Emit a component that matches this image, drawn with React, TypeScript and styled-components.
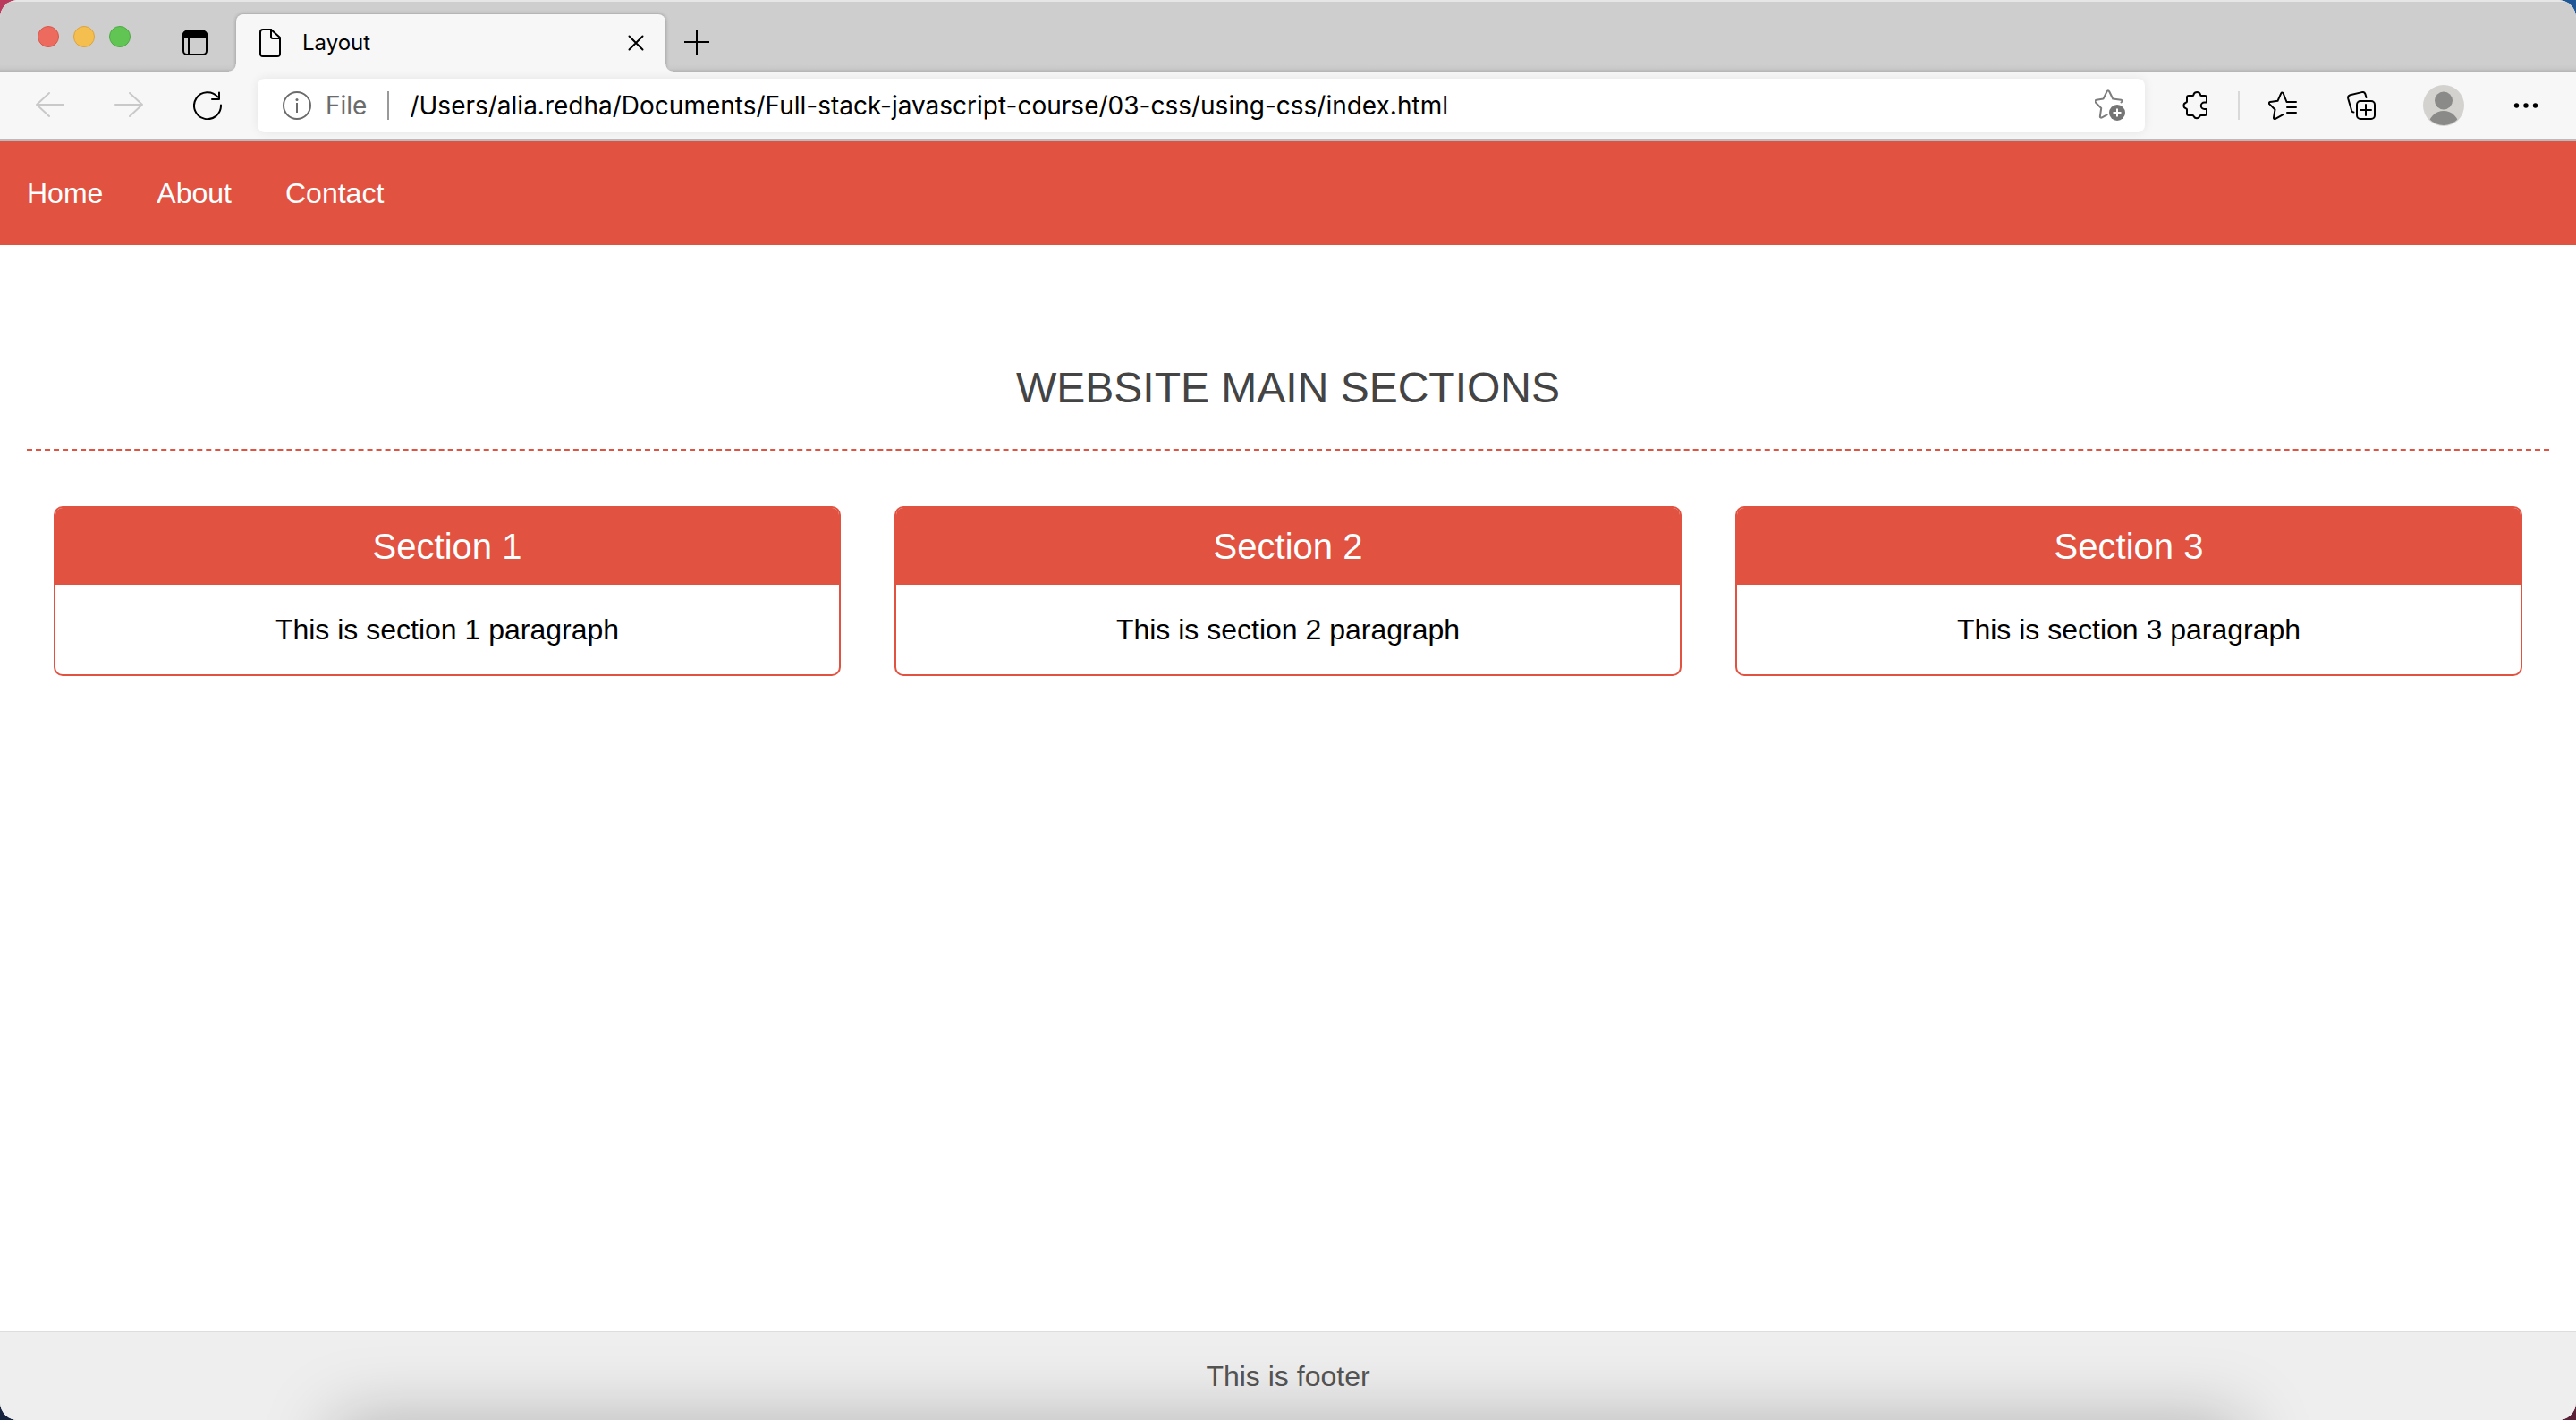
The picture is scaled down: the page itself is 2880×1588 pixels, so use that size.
import React from "react";
import styled, { createGlobalStyle } from "styled-components";

const red = "#e15241";
const chromeFont = `Inter, "Noto Sans", sans-serif`;
const pageFont = `"Liberation Sans", Arial, Helvetica, sans-serif`;

const GlobalStyle = createGlobalStyle`
  *, *::before, *::after { box-sizing: border-box; }
  body {
    margin: 0;
    background:
      linear-gradient(#b93a5c, #b93a5c) left top / 50% 50% no-repeat,
      linear-gradient(#1f5796, #1f5796) right top / 50% 50% no-repeat,
      linear-gradient(#16233f, #16233f) left bottom / 50% 50% no-repeat,
      linear-gradient(#5a2138, #5a2138) right bottom / 50% 50% no-repeat;
  }
`;

const Window = styled.div`
  display: flex;
  flex-direction: column;
  min-height: 100vh;
  border-radius: 20px;
  overflow: hidden;
  background: #fff;
  font-family: ${pageFont};
`;

/* Browser chrome */

const TabStrip = styled.div`
  display: flex;
  height: 80px;
  padding-left: 42px;
  border-top: 2px solid #e6e6e6;
  background: linear-gradient(to top, #b4b4b4, #c8c8c8 3px, #cecece 8px);
`;

const Lights = styled.div`
  display: flex;
  align-items: center;
  gap: 16px;
  margin-right: 58px;
`;

const Light = styled.button<{ $fill: string; $edge: string }>`
  width: 24px;
  height: 24px;
  padding: 0;
  border: 1px solid ${(p) => p.$edge};
  border-radius: 50%;
  background: ${(p) => p.$fill};
`;

const IconButton = styled.button<{ $color?: string }>`
  display: flex;
  align-items: center;
  justify-content: center;
  flex: none;
  padding: 0;
  border: 0;
  background: none;
  color: ${(p) => p.$color ?? "#000"};

  &:disabled {
    color: #c9c9c9;
  }

  svg {
    display: block;
  }
`;

const StripButton = styled(IconButton)`
  margin-top: 14px;
`;

const Tab = styled.div`
  position: relative;
  display: flex;
  align-items: center;
  width: 480px;
  margin: 14px 20px 0 32px;
  padding: 0 24px 0 26px;
  border-radius: 8px 8px 0 0;
  background: #f7f7f7;
  box-shadow: 0 0 4px rgba(0, 0, 0, 0.3);

  &::before,
  &::after {
    content: "";
    position: absolute;
    bottom: 0;
    width: 8px;
    height: 8px;
  }
  &::before {
    right: 100%;
    background: radial-gradient(circle at 0 0, transparent 7px, #f7f7f7 8px);
  }
  &::after {
    left: 100%;
    background: radial-gradient(circle at 100% 0, transparent 7px, #f7f7f7 8px);
  }
`;

const TabTitle = styled.span`
  flex: 1;
  margin-left: 24px;
  font: 400 24px/32px ${chromeFont};
`;

const Toolbar = styled.div`
  position: relative;
  display: flex;
  align-items: center;
  height: 78px;
  padding: 0 40px;
  border-bottom: 2px solid #b9bcbe;
  background: #f7f7f7;
`;

const ButtonGroup = styled.div`
  display: flex;
  align-items: center;
  gap: 56px;
`;

const AddressBar = styled.div`
  display: flex;
  flex: 1;
  align-items: center;
  height: 60px;
  margin: 0 40px;
  padding: 0 20px 0 28px;
  border-radius: 8px;
  background: #fff;
  box-shadow: 0 0 12px rgba(0, 0, 0, 0.08);
`;

const Scheme = styled.label`
  margin-left: 16px;
  color: #6b6b6b;
  font: 400 28px/36px ${chromeFont};
`;

const Divider = styled.span<{ $color: string; $space: number }>`
  width: 2px;
  height: 32px;
  margin: 0 ${(p) => p.$space}px;
  background: ${(p) => p.$color};
`;

const Url = styled.input`
  flex: 1;
  min-width: 0;
  padding: 0;
  border: 0;
  outline: 0;
  background: none;
  color: #000;
  font: 400 28px/36px ${chromeFont};
`;

const Profile = styled(IconButton)`
  margin: 0 52px;
`;

/* Web page */

const Nav = styled.nav`
  display: flex;
  background: ${red};
`;

const NavLink = styled.a`
  padding: 40px 30px;
  color: #fff;
  font-size: 32px;
  line-height: 36px;
  text-decoration: none;
`;

const Main = styled.main`
  flex: 1;
  padding: 132px 30px 60px;
`;

const Heading = styled.h1`
  margin: 0 0 32px;
  padding-bottom: 40px;
  border-bottom: 2px dashed ${red};
  color: #444;
  font-size: 48px;
  font-weight: 400;
  line-height: 56px;
  text-align: center;
  text-transform: uppercase;
`;

const Sections = styled.div`
  display: grid;
  grid-template-columns: repeat(3, 1fr);
  gap: 60px;
  padding: 30px;
`;

const Card = styled.section`
  overflow: hidden;
  border: 2px solid ${red};
  border-radius: 10px;
  text-align: center;
`;

const CardTitle = styled.h2`
  margin: 0;
  padding: 20px;
  background: ${red};
  color: #fff;
  font-size: 40px;
  font-weight: 400;
  line-height: 46px;
`;

const CardText = styled.p`
  margin: 0;
  padding: 32px;
  font-size: 32px;
  line-height: 36px;
`;

const Footer = styled.footer`
  position: relative;
  overflow: hidden;
  padding: 31px;
  border-top: 2px solid #ddd;
  background: #eee;
  color: #555;
  font-size: 32px;
  line-height: 36px;
  text-align: center;

  /* soft shadow cast upwards by the dock below the window */
  &::after {
    content: "";
    position: absolute;
    top: 100%;
    left: 13%;
    right: 13%;
    height: 120px;
    box-shadow: 0 0 80px rgba(0, 0, 0, 0.25);
  }
`;

/* Icons */

const stroke = {
  fill: "none",
  stroke: "currentColor",
  strokeWidth: 2,
  strokeLinecap: "round",
  strokeLinejoin: "round",
} as const;

const SidebarIcon = () => (
  <svg width="28" height="28" viewBox="0 0 28 28" {...stroke}>
    <rect x="1" y="1" width="26" height="26" rx="4" />
    <path d="M1 7V5a4 4 0 0 1 4-4h18a4 4 0 0 1 4 4v2z" fill="currentColor" />
    <path d="M7 8v19" />
  </svg>
);

const FileIcon = () => (
  <svg width="24" height="32" viewBox="0 0 24 32" {...stroke}>
    <path d="M4 1h9l10 9v18a3 3 0 0 1-3 3H4a3 3 0 0 1-3-3V4a3 3 0 0 1 3-3z" />
    <path d="M13 1v8a2 2 0 0 0 2 2h8" />
  </svg>
);

const CloseIcon = () => (
  <svg width="18" height="18" viewBox="0 0 18 18" {...stroke}>
    <path d="M1.5 1.5l15 15M16.5 1.5l-15 15" />
  </svg>
);

const PlusIcon = () => (
  <svg width="30" height="30" viewBox="0 0 30 30" {...stroke} strokeLinecap="butt">
    <path d="M15 0v28M1 14h28" />
  </svg>
);

const BackIcon = () => (
  <svg width="32" height="32" viewBox="0 0 32 32" {...stroke}>
    <path d="M31 15H1M15 2L1 15l14 13" />
  </svg>
);

const ForwardIcon = () => (
  <svg width="32" height="32" viewBox="0 0 32 32" {...stroke}>
    <path d="M1 15h30M17 2l14 13-14 13" />
  </svg>
);

const ReloadIcon = () => (
  <svg width="32" height="32" viewBox="0 0 32 32" {...stroke}>
    <path d="M31 15.500A15 15 0 1 1 27.500 6.500" />
    <path d="M29 1.500V9h-8" />
  </svg>
);

const InfoIcon = () => (
  <svg width="32" height="32" viewBox="0 0 32 32" {...stroke} strokeLinecap="butt">
    <circle cx="16" cy="16" r="15" />
    <path d="M16 13v11" />
    <circle cx="16" cy="9.500" r="1.500" fill="currentColor" stroke="none" />
  </svg>
);

const AddFavoriteIcon = () => (
  <svg width="36" height="36" viewBox="0 0 36 36" {...stroke}>
    <path
      d="M29.500 14.500c1.500-1 1.500-2.500 0-2.700l-9.300-1.300L16.200 2.200c-.7-1.300-2-1.300-2.600 0L9.500 10.500 1.900 11.800c-1.600.3-2 1.700-1 2.700l6.300 6.500-1.300 9c-.2 1.500.9 2 2.200 1.300l5.500-3"
      stroke="#7d7d7d"
    />
    <circle cx="25" cy="26" r="9" fill="#757575" stroke="none" />
    <path d="M25 21.500v9M20.500 26h9" stroke="#fff" strokeLinecap="butt" />
  </svg>
);

const PuzzleIcon = () => (
  <svg width="32" height="34" viewBox="0 0 32 34" {...stroke}>
    <path d="M9 6h4.500c.8 0 1-.5 1-1.300a4 4 0 0 1 7.500 0c0 .8.300 1.300 1 1.300H27a2 2 0 0 1 2 2v5.500h-2.500a3.700 3.700 0 0 0 0 7.500H29v5a2 2 0 0 1-2 2h-4.500c-.8 0-1 .5-1.200 1.300a3.700 3.700 0 0 1-6.600 0c-.3-.8-.5-1.300-1.200-1.300H9a2 2 0 0 1-2-2v-4.500c0-.8-.4-1-1.200-1.200a3.500 3.500 0 0 1 0-6.600c.8-.2 1.200-.4 1.200-1.200V8a2 2 0 0 1 2-2z" />
  </svg>
);

const FavoritesIcon = () => (
  <svg width="32" height="32" viewBox="0 0 32 32" {...stroke}>
    <path d="M31 12H20.500L16.700 2.400c-.5-1.200-1.900-1.200-2.500 0L10.500 10.800 2 12c-1.300.3-1.500 1.500-.7 2.400l6.200 6.100L6 29.500c-.2 1.400.8 2 2 1.300l8.500-4.600" />
    <path d="M21 18h10M21 24h10" />
  </svg>
);

const CollectionsIcon = () => (
  <svg width="32" height="32" viewBox="0 0 32 32" {...stroke}>
    <path d="M7.500 23.500c-1.300 0-2-.8-2.400-2L1.300 8.500C.8 6.500 1.500 5 3.500 4.300l13-3.200c2-.5 3.200.2 3.900 2L21.500 7" />
    <rect x="11" y="11" width="20" height="20" rx="4" />
    <path d="M21 15v12M15 21h12" />
  </svg>
);

const AvatarIcon = () => (
  <svg width="48" height="48" viewBox="0 0 48 48">
    <clipPath id="avatar-clip">
      <circle cx="24" cy="24" r="22" />
    </clipPath>
    <circle cx="24" cy="24" r="23" fill="#d3d2cf" />
    <circle cx="24" cy="18.500" r="10" fill="#8a8a89" />
    <circle cx="24" cy="47" r="17" fill="#8a8a89" clipPath="url(#avatar-clip)" />
  </svg>
);

const MoreIcon = () => (
  <svg width="32" height="32" viewBox="0 0 32 32" fill="currentColor">
    <circle cx="5.500" cy="16" r="2.700" />
    <circle cx="16" cy="16" r="2.700" />
    <circle cx="26.500" cy="16" r="2.700" />
  </svg>
);

const links = ["Home", "About", "Contact"];
const sections = [1, 2, 3];

export default function App() {
  return (
    <>
      <GlobalStyle />
      <Window>
        <TabStrip>
          <Lights>
            <Light aria-label="Close window" $fill="#ed6a5e" $edge="#d8564b" />
            <Light aria-label="Minimize window" $fill="#f5bf4f" $edge="#dba33c" />
            <Light aria-label="Zoom window" $fill="#61c554" $edge="#4fa943" />
          </Lights>
          <StripButton aria-label="Tab actions">
            <SidebarIcon />
          </StripButton>
          <Tab>
            <FileIcon />
            <TabTitle>Layout</TabTitle>
            <IconButton aria-label="Close tab">
              <CloseIcon />
            </IconButton>
          </Tab>
          <StripButton aria-label="New tab">
            <PlusIcon />
          </StripButton>
        </TabStrip>

        <Toolbar>
          <ButtonGroup>
            <IconButton aria-label="Back" disabled>
              <BackIcon />
            </IconButton>
            <IconButton aria-label="Forward" disabled>
              <ForwardIcon />
            </IconButton>
            <IconButton aria-label="Reload">
              <ReloadIcon />
            </IconButton>
          </ButtonGroup>
          <AddressBar>
            <IconButton aria-label="Site information" $color="#6b6b6b">
              <InfoIcon />
            </IconButton>
            <Scheme htmlFor="address">File</Scheme>
            <Divider $color="#999" $space={23} />
            <Url
              id="address"
              type="text"
              defaultValue="/Users/alia.redha/Documents/Full-stack-javascript-course/03-css/using-css/index.html"
            />
            <IconButton aria-label="Add to favorites">
              <AddFavoriteIcon />
            </IconButton>
          </AddressBar>
          <IconButton aria-label="Extensions">
            <PuzzleIcon />
          </IconButton>
          <Divider $color="#d9d9d9" $space={32} />
          <ButtonGroup>
            <IconButton aria-label="Favorites">
              <FavoritesIcon />
            </IconButton>
            <IconButton aria-label="Collections">
              <CollectionsIcon />
            </IconButton>
          </ButtonGroup>
          <Profile aria-label="Profile">
            <AvatarIcon />
          </Profile>
          <IconButton aria-label="More">
            <MoreIcon />
          </IconButton>
        </Toolbar>

        <Nav>
          {links.map((name) => (
            <NavLink key={name} href="#">
              {name}
            </NavLink>
          ))}
        </Nav>

        <Main>
          <Heading>Website main sections</Heading>
          <Sections>
            {sections.map((n) => (
              <Card key={n}>
                <CardTitle>{`Section ${n}`}</CardTitle>
                <CardText>{`This is section ${n} paragraph`}</CardText>
              </Card>
            ))}
          </Sections>
        </Main>

        <Footer>This is footer</Footer>
      </Window>
    </>
  );
}
